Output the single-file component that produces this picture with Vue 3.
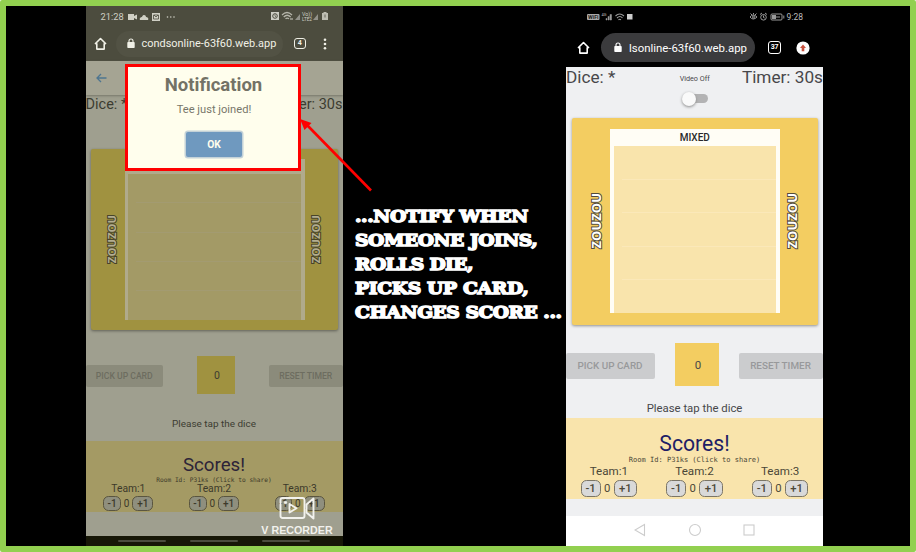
<script setup>
const phones = [
  { id: 'left', url: 'condsonline-63f60.web.app', tabs: '4', room: 'P31ks' },
  { id: 'right', url: 'lsonline-63f60.web.app', tabs: '37', room: 'P31ks' },
]
const teams = [1, 2, 3]
const caption = ['...NOTIFY WHEN', 'SOMEONE JOINS,', 'ROLLS DIE,', 'PICKS UP CARD,', 'CHANGES SCORE ...']
</script>

<template>
  <main class="slide">
    <section v-for="p in phones" :key="p.id" class="phone" :class="p.id">
      <header class="browser">
        <div class="status">
          <template v-if="p.id === 'left'">
            <span class="clock">21:28</span>
            <svg class="st-left" width="48" height="10" viewBox="0 0 48 10">
              <g fill="#cfcfc4">
                <path d="M0 2h6v2l3-1.500v5L6 6v2H0z" />
                <path d="M12 8c-1-2 1-3 2-3 1-3 4-2 4 0 2 0 3 2 2 3z" />
                <path d="M24 1h8v8h-8z" />
                <circle cx="39.500" cy="5" r=".8" /><circle cx="42.800" cy="5" r=".8" /><circle cx="46" cy="5" r=".8" />
              </g>
              <path d="M25.500 3h5v4h-5zM26 3l2 2 2-2" fill="none" stroke="#4d4d3f" stroke-width=".8" />
            </svg>
            <svg class="st-right" width="59" height="11" viewBox="0 0 59 11">
              <path d="M1 1h8v8H1z" fill="#cfcfc4" /><circle cx="5" cy="5" r="2.300" fill="none" stroke="#4d4d3f" /><path d="M5 3.500V5l1 1" fill="none" stroke="#4d4d3f" stroke-width=".7" />
              <path d="M12 4q5-5 10 0M13.700 6q3.500-3.500 7 0M15.500 7.800q1.700-1.500 3.500 0" fill="none" stroke="#b5b5aa" stroke-width="1.200" />
              <path d="M20 8h3" stroke="#cfcfc4" /><path d="M25 9l5-6v6zM43 9l5-6v6z" fill="#92928a" />
              <text x="32" y="5" font-size="5" textLength="10" lengthAdjust="spacingAndGlyphs" fill="#cfcfc4">Vo))</text>
              <text x="32" y="10" font-size="5" textLength="10" lengthAdjust="spacingAndGlyphs" fill="#cfcfc4">LTE2</text>
              <path d="M52 2h1.500V1h3v1H58v7h-6z" fill="#bdbdb2" /><path d="M55 3.500v3" stroke="#66665a" />
            </svg>
          </template>
          <template v-else>
            <svg class="st-left" width="48" height="10" viewBox="0 0 48 10">
              <rect x="0" y="2" width="12.500" height="6" rx="1" fill="#aaa" />
              <text x="1" y="7" font-size="5" font-weight="700" textLength="10.500" lengthAdjust="spacingAndGlyphs" fill="#222">WiFi</text>
              <text x="14.500" y="4" font-size="4" fill="#bbb">4G</text>
              <path d="M19 8V6.500h1V8zM21 8V4.500h1.200V8zM23 8V2.500h1.500V8z" fill="#999" stroke="#999" stroke-width=".5" />
              <path d="M28.500 4q4-4 8.500 0M30 6q3-3 5.500 0M31.500 7.800q1-1 2.500 0" fill="none" stroke="#999" stroke-width="1.100" />
              <rect x="40" y="2" width="5.500" height="5.500" fill="#ccc" />
            </svg>
            <svg class="st-right" width="36" height="10" viewBox="0 0 36 10">
              <g fill="none" stroke="#aaa" stroke-width=".9">
                <path d="M1 5q3-4 7 0-4 4-7 0M1.500 1.500L3 3M4.500 1v1.500M7.500 1.500L6 3" /><circle cx="4.500" cy="5" r="1" />
                <circle cx="14.500" cy="5.300" r="2.800" /><path d="M11 2.500L13 1M18 2.500L16 1M14.500 3.500v2l1.200.5" />
                <rect x="22" y="2" width="11" height="6" rx="1" /><path d="M34.800 3.500v3" />
              </g>
              <path d="M23 3h4v4h-4zM27 4.500h4v1h-4z" fill="#999" />
            </svg>
            <span class="clock">9:28</span>
          </template>
        </div>
        <div class="address">
          <svg class="home" width="13" height="14" viewBox="0 0 13 14"><path d="M1 7l5.500-5.500L12 7M2.800 6.200v5.900h7.400V6.200" fill="none" stroke="currentColor" stroke-width="1.600" stroke-linejoin="round" /></svg>
          <div class="pill">
            <svg class="lock" width="8" height="11" viewBox="0 0 8 11"><rect x=".3" y="4" width="7.400" height="6" rx=".8" fill="currentColor" /><path d="M2 4.500V3a2 2 0 0 1 4 0v1.500" fill="none" stroke="currentColor" stroke-width="1.100" /></svg>
            <span class="url">{{ p.url }}</span>
          </div>
          <span class="tabs">{{ p.tabs }}</span>
          <svg v-if="p.id === 'left'" class="more" width="4" height="12" viewBox="0 0 4 12" fill="currentColor"><circle cx="2" cy="1.800" r="1.300" /><circle cx="2" cy="6" r="1.300" /><circle cx="2" cy="10.200" r="1.300" /></svg>
          <svg v-else class="more" width="14" height="14" viewBox="0 0 14 14"><circle cx="7" cy="7" r="6.600" fill="#fff" /><path d="M7 3.500L10 7H8.300v3.200H5.700V7H4z" fill="#c8523f" /></svg>
        </div>
      </header>

      <div v-if="p.id === 'left'" class="appbar">
        <svg width="11" height="10" viewBox="0 0 11 10"><path d="M10.500 5H1M5 1L1 5l4 4" fill="none" stroke="#4e7590" stroke-width="1.300" /></svg>
      </div>

      <div class="info">
        <span class="big dice-label">Dice: *</span>
        <div v-if="p.id === 'right'" class="video">
          <span>Video Off</span>
          <i class="switch"><b></b></i>
        </div>
        <span class="big timer">Timer: 30s</span>
      </div>

      <article class="board">
        <div class="side"><span>ZOUZOU</span></div>
        <div class="sheet">
          <h3>MIXED</h3>
          <div class="lines"><i v-for="n in 5" :key="n"></i></div>
        </div>
        <div class="side"><span>ZOUZOU</span></div>
      </article>

      <div class="controls">
        <button class="pick">PICK UP CARD</button>
        <div class="die">0</div>
        <button class="reset">RESET TIMER</button>
      </div>
      <p class="hint"><span>Please tap the dice</span></p>

      <div class="scores">
        <h2>Scores!</h2>
        <p class="room">Room Id: {{ p.room }} (Click to share)</p>
        <div class="teams">
          <div v-for="t in teams" :key="t" class="team">
            <span class="name">Team:{{ t }}</span>
            <div class="row"><span class="minus">-1</span><span>0</span><span class="plus">+1</span></div>
          </div>
        </div>
      </div>

      <footer class="nav">
        <template v-if="p.id === 'left'"><i v-for="n in 3" :key="n"></i></template>
        <svg v-else width="122" height="14" viewBox="0 0 122 14" fill="none" stroke="#ccc" stroke-width="1.100">
          <path d="M10.500 1.500v11L1 7z" /><circle cx="61" cy="7" r="5.500" /><rect x="110" y="2" width="10" height="10" />
        </svg>
      </footer>
    </section>

    <div class="dialog">
      <h1>Notification</h1>
      <p>Tee just joined!</p>
      <button>OK</button>
    </div>

    <svg class="arrow" width="76" height="78" viewBox="0 0 76 78">
      <path d="M7 7L71 72.500" stroke="#f00" stroke-width="2.600" /><path d="M0 1l11.500 4L4.500 12z" fill="#f00" />
    </svg>

    <div class="caption"><span v-for="(c, i) in caption" :key="c" :class="'c' + i">{{ c }}</span></div>

    <div class="recorder">
      <svg width="37" height="24" viewBox="0 0 37 24" fill="none" stroke="#f2f2ed" stroke-width="1.900" stroke-linejoin="round">
        <rect x="1.500" y="2" width="24" height="20" rx="2" /><path d="M10.500 8v8.500l7-4.200zM27.500 8.500l7-6v20l-7-6z" /><circle cx="6.500" cy="6.500" r="1.200" fill="#f2f2ed" stroke-width="1" />
      </svg>
      <span>V RECORDER</span>
    </div>
  </main>
</template>

<style>
body { margin: 0; background: #fff; }
</style>

<style scoped>
* { box-sizing: border-box; margin: 0; }
.slide { position: relative; width: 916px; height: 552px; border: 6px solid #92d050; border-radius: 2px; background: #000; font-family: Roboto, "Liberation Sans", sans-serif; display: flex; justify-content: space-between; padding: 0 87px 0 79.500px; overflow: hidden; }
.phone { width: 257px; height: 540px; display: flex; flex-direction: column; overflow: hidden; white-space: nowrap; }
.left { --band: #a49a64; --gold: #a09240; --sheet: #a39a66; --white: #b0aa8c; --ink: #3c3c31; --btn: #8b8b7b; --btnink: #6d6d60; --chip: #8f8f7e; --edge: #5a553f; background: #9f9f8f; }
.right { --band: #f9e4ac; --gold: #f3cd61; --sheet: #f9e4ac; --white: #fffdf5; --ink: #47474a; --btn: #cbccce; --btnink: #98999b; --chip: #d9d9d9; --edge: #7b7566; background: #eff0f2; }

.browser { flex: none; display: flex; flex-direction: column; }
.left .browser { background: #4c4c3e; height: 55px; }
.right .browser { background: #000; height: 61px; }
.status { display: flex; align-items: center; height: 21px; flex: none; }
.left .status { padding-left: 15px; }
.right .status { padding: 0 20px 0 21px; height: 22px; }
.st-right { margin-left: auto; }
.left .st-left { margin-left: 4px; }
.left .st-right { margin-right: 14px; }
.clock { color: #cfcfc4; font-size: 9.300px; line-height: 12px; }
.right .clock { color: #bcbcbc; font-size: 8.500px; margin-left: 2px; }
.address { display: flex; align-items: center; }
.left .address { height: 33px; padding-left: 8.500px; color: #f0f0e6; }
.right .address { height: 38px; padding: 1px 0 0 11px; color: #fff; }
.pill { display: flex; align-items: center; }
.left .pill { width: 167px; height: 26px; margin-left: 8.500px; padding-left: 11px; border-radius: 13px; background: #525244; }
.right .pill { width: 154px; height: 29px; margin-left: 10.500px; padding-left: 13px; border-radius: 15px; background: #3b3b3d; }
.left .url { font-size: 10.950px; margin-left: 7px; }
.right .url { font-size: 11.400px; margin-left: 7.500px; }
.tabs { border: 1.500px solid currentColor; border-radius: 3px; width: 11.500px; height: 11px; font-size: 7px; line-height: 9px; text-align: center; font-weight: 700; }
.left .tabs { margin-left: 11.500px; }
.right .tabs { margin-left: 13.500px; width: 13px; height: 13px; line-height: 11px; letter-spacing: -.3px; }
.left .more { margin-left: 17px; }
.right .more { margin-left: 15px; }

.appbar { flex: none; height: 34px; padding: 12px 0 0 10px; background: #a5a493; box-shadow: 0 1px 2px #77776a; line-height: 0; }
.info { flex: none; display: flex; justify-content: space-between; position: relative; color: var(--ink); }
.left .info { height: 54px; }
.right .info { height: 50.500px; }
.left .big { font-size: 14.500px; line-height: 19px; }
.right .big { font-size: 17.200px; line-height: 21px; }
.video { display: flex; flex-direction: column; align-items: center; font-size: 7.200px; line-height: 9px; padding: 7px 0 0 32px; }
.switch { display: block; width: 23px; height: 9px; margin: 11px 0 0 3px; border-radius: 5px; background: #b3b3b4; }
.switch b { display: block; width: 14px; height: 14px; margin: -2.500px 0 0 -3px; border-radius: 50%; background: #fafafa; box-shadow: 0 1px 3px #888; }

.board { flex: none; display: flex; background: var(--gold); border-radius: 2px; box-shadow: 0 1px 3px rgba(0,0,0,.4); }
.left .board { height: 180.500px; margin: 0 4.500px 0 5.500px; padding: 10px 0; }
.right .board { height: 207px; margin: 0 5px 0 5.500px; padding: 11.500px 0 11.500px; }
.side { flex: none; display: flex; align-items: center; justify-content: center; }
.left .side { width: 33.500px; padding-left: 8px; }
.left .side:last-child { padding: 0 11px 0 0; }
.right .side { width: 38.500px; padding-left: 12px; }
.right .side:last-child { padding: 0 13px 0 0; }
.side span { writing-mode: vertical-rl; transform: rotate(180deg); font-family: "Open Sans", sans-serif; font-weight: 700; paint-order: stroke fill; line-height: 1; }
.left .side span { font-size: 11.300px; color: #b3ad91; -webkit-text-stroke: 2px #474429; }
.right .side span { font-size: 13px; color: #fff; -webkit-text-stroke: 2px #514b3c; }
.sheet { flex: 1; background: var(--white); display: flex; flex-direction: column; padding: 0 3.500px; }
h3 { flex: none; text-align: center; font-weight: 500; color: #28282a; font-size: 10px; line-height: 17px; }
.left h3 { font-size: 8px; line-height: 15px; color: #555; }
.lines { flex: 1; background: var(--sheet); display: flex; flex-direction: column; padding-left: 8px; }
.lines i { flex: 1; border-bottom: 1px solid rgba(165,160,140,.3); }
.right .lines i { border-color: rgba(255,238,205,.4); }
.lines i:last-child { border: 0; }

.controls { flex: none; display: flex; justify-content: space-between; align-items: center; }
.left .controls { margin-top: 26.500px; height: 37.500px; padding-top: 2px; }
.right .controls { margin-top: 18.500px; height: 42.500px; padding-top: 3px; }
.controls button { font-family: inherit; border: 0; padding: 0; background: var(--btn); color: var(--btnink); font-weight: 500; border-radius: 2px; }
.left button { height: 22px; font-size: 8.650px; }
.right button { height: 25.500px; font-size: 9.900px; }
.left .pick { width: 77.500px; }
.left .reset { width: 73.500px; }
.right .pick { width: 89px; padding-right: 1px; }
.right .reset { width: 84px; padding-right: 1px; }
.die { flex: none; display: flex; align-items: center; justify-content: center; background: var(--gold); color: var(--ink); padding-left: 2px; }
.left .die { width: 38.500px; height: 37.500px; font-size: 10.500px; margin: -2px 0 0; padding-top: 2px; }
.right .die { width: 43.500px; height: 42.500px; font-size: 11.500px; margin: -3px 0 0; padding-top: 1px; }
.hint { flex: none; text-align: center; color: var(--ink); }
.left .hint { height: 47.500px; font-size: 9.950px; line-height: 60px; }
.right .hint { height: 32px; font-size: 11.350px; line-height: 45px; }

.scores { flex: none; background: var(--band); text-align: center; color: #4b4737; }
.left .scores { height: 71px; padding-top: 12.500px; color: #3c392a; }
.right .scores { height: 81px; padding-top: 13.500px; }
h2 { font-weight: 400; color: #211d66; }
.left h2 { font-size: 18.700px; line-height: 22px; color: #2c2438; }
.right h2 { font-size: 21.200px; line-height: 25px; }
.room { font-family: "DejaVu Sans Mono", monospace; }
.left .room { font-size: 6.200px; line-height: 7px; }
.right .room { font-size: 7.060px; line-height: 8px; }
.teams { display: flex; }
.team { flex: 1; display: flex; flex-direction: column; align-items: center; }
.left .name { font-size: 10.300px; line-height: 12px; }
.right .name { font-size: 11.600px; line-height: 14px; }
.row { display: flex; align-items: center; justify-content: space-between; }
.left .row { width: 50px; height: 15px; margin-top: 1.500px; font-size: 10px; }
.right .row { width: 56.500px; height: 17px; margin-top: 1.500px; font-size: 11.300px; }
.minus, .plus { display: flex; align-items: center; justify-content: center; height: 100%; background: var(--chip); border: 1px solid var(--edge); border-radius: 5.500px; font-weight: 500; }
.left .minus { width: 17.500px; }
.left .plus { width: 21px; }
.right .minus { width: 20px; }
.right .plus { width: 23.500px; }

.nav { display: flex; align-items: center; }
.left .nav { margin-top: auto; height: 10px; background: #171707; justify-content: center; gap: 24px; padding: 0 0 1px; }
.nav i { width: 48px; height: 2px; border-radius: 1px; background: #4c4c3e; }
.right .nav { margin-top: auto; height: 30.500px; background: #fff; justify-content: center; padding-bottom: 2px; }

.dialog { position: absolute; left: 119px; top: 58px; width: 176px; height: 107px; border: 3px solid #f00; background: #fffeed; display: flex; flex-direction: column; align-items: center; color: #77766a; }
.dialog h1 { font-size: 18.500px; line-height: 22px; font-weight: 700; margin: 7px 0 0 1px; color: #737266; }
.dialog p { font-size: 11.150px; line-height: 14px; margin: 7px 0 0 2px; }
.dialog button { font-family: inherit; width: 56px; height: 25px; margin: 15px 0 0 2px; border: 0; border-radius: 2px; background: #6f99bf; color: #fffeed; font-size: 10.300px; font-weight: 700; box-shadow: 0 0 0 1.500px #c4d2d8; }
.arrow { position: absolute; left: 294px; top: 112px; }
.caption { position: absolute; left: 349px; top: 197.500px; display: flex; flex-direction: column; align-items: flex-start; color: #fff; font-family: "DejaVu Serif", serif; font-weight: 700; font-size: 17.500px; line-height: 24px; white-space: nowrap; -webkit-text-stroke: 1.500px #fff; letter-spacing: -.45px; transform: scaleX(1.067); transform-origin: 0 0; }
.c0 { letter-spacing: -.38px; }
.c2 { letter-spacing: -.55px; }
.c3 { letter-spacing: -.28px; }
.recorder { position: absolute; left: 254px; top: 490px; width: 74px; display: flex; flex-direction: column; align-items: center; color: #f2f2ed; font-family: "Liberation Sans", sans-serif; font-size: 10.700px; line-height: 14px; font-weight: 700; white-space: nowrap; }
.recorder svg { margin-left: 0; }
.recorder span { margin-top: 3px; }
</style>
